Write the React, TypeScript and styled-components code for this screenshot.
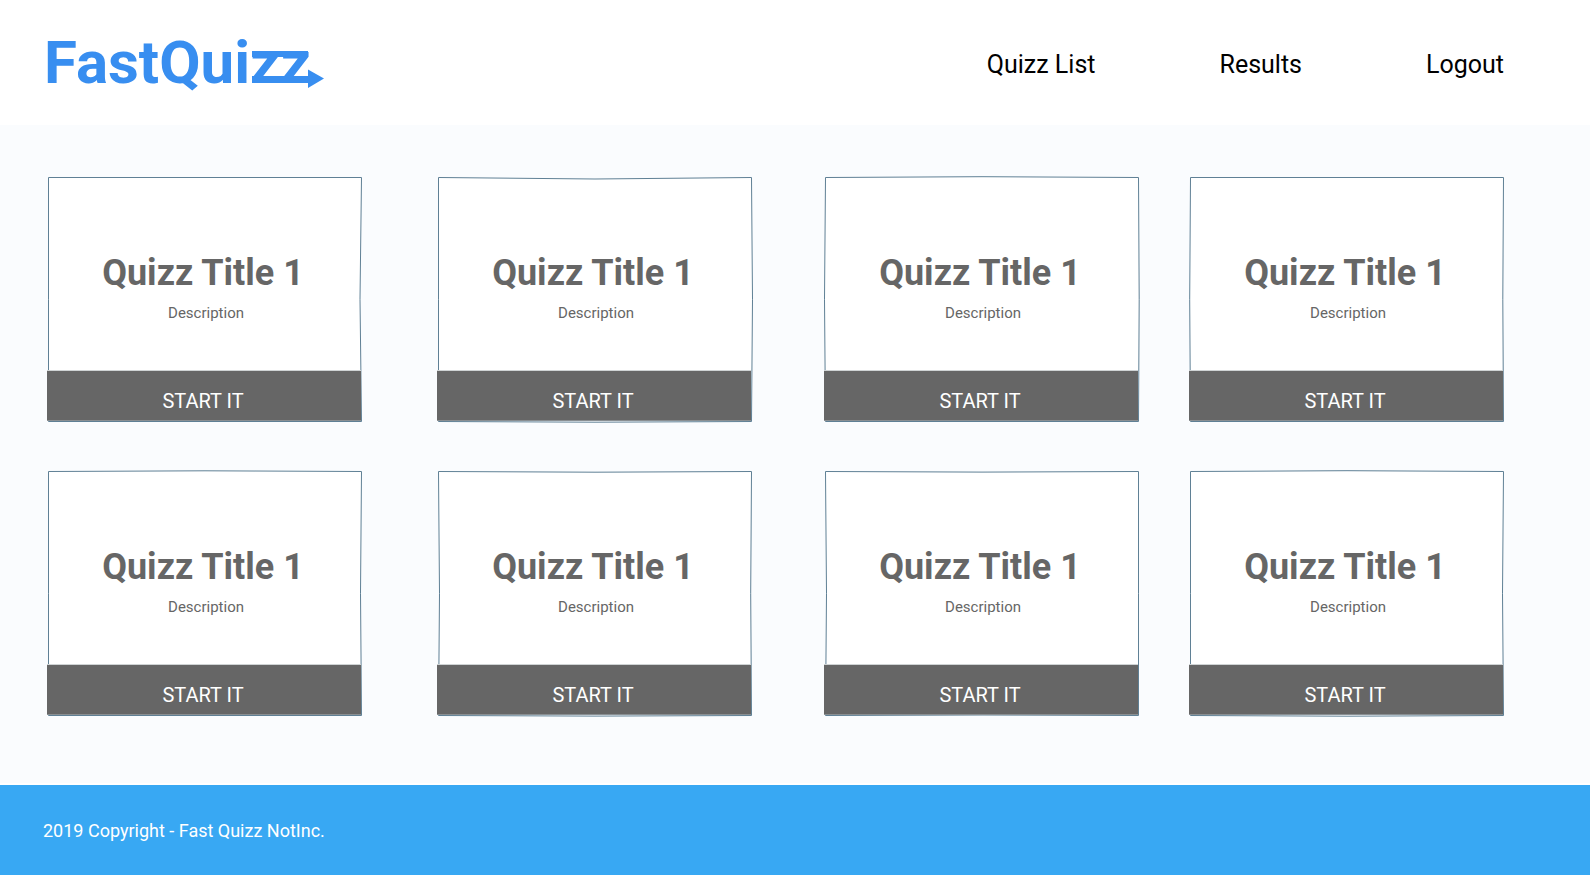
import React from "react";
import styled, { createGlobalStyle } from "styled-components";

const GlobalStyle = createGlobalStyle`
  *, *::before, *::after { box-sizing: border-box; }
  body {
    margin: 0;
    background: #ffffff;
    font-family: Roboto, "Liberation Sans", sans-serif;
  }
`;

const Page = styled.div`
  display: flex;
  flex-direction: column;
  min-height: 100vh;
`;

const Header = styled.header`
  display: flex;
  align-items: center;
  justify-content: space-between;
  height: 125px;
  padding: 0 86px 0 44px;
  background: #ffffff;
`;

const LogoLink = styled.a`
  display: block;
  line-height: 0;
`;

const LogoText = styled.text`
  font-family: Roboto, "Liberation Sans", sans-serif;
  font-size: 60px;
  font-weight: 700;
  fill: #388ef0;
`;

const Nav = styled.nav`
  display: flex;
  gap: 124px;
  padding-top: 4px;
`;

const NavLink = styled.a`
  color: #000000;
  font-size: 25px;
  line-height: 30px;
  text-decoration: none;
`;

const Main = styled.main`
  flex: 1;
  padding: 52px 86px 67px 48px;
  background: #fafcfe;
`;

const QuizGrid = styled.ul`
  display: grid;
  grid-template-columns: 390fr 387fr 365fr 314fr;
  row-gap: 49px;
  margin: 0;
  padding: 0;
  list-style: none;
`;

const Card = styled.li`
  position: relative;
  display: flex;
  flex-direction: column;
  width: 100%;
  max-width: 314px;
  height: 245px;
`;

const Outline = styled.svg`
  position: absolute;
  inset: 0;
  width: 100%;
  height: 100%;
  overflow: visible;
`;

const CardBody = styled.div`
  position: relative;
  flex: 1;
  padding-top: 73px;
  text-align: center;
`;

const Title = styled.h2`
  margin: 0;
  padding-right: 4px;
  color: #666666;
  font-size: 36px;
  font-weight: 700;
  line-height: 46px;
`;

const Description = styled.p`
  margin: 7px 0 0;
  padding-left: 2px;
  color: #666666;
  font-size: 15px;
  line-height: 20px;
`;

const StartButton = styled.button`
  position: relative;
  width: 100%;
  height: 51px;
  margin: 0 0 1px -1px;
  padding: 11px 2px 0 0;
  border: 0;
  border-top: 1px solid #cfd3d4;
  border-bottom: 1px solid #8a8f92;
  background: #666666;
  color: #ffffff;
  font-family: inherit;
  font-size: 20px;
  line-height: 24px;
  cursor: pointer;
`;

const Footer = styled.footer`
  display: flex;
  align-items: center;
  height: 90px;
  margin-top: 2px;
  padding: 2px 43px 0;
  background: #38a8f3;
  color: #ffffff;
  font-size: 18px;
  line-height: 24px;
`;

// How far each hand-drawn edge bows at its middle: top, right, bottom, left.
type Bow = [number, number, number, number];

const quizzes: { id: number; title: string; description: string; bow: Bow }[] = [
  { id: 1, title: "Quizz Title 1", description: "Description", bow: [0, -1.5, 0, 0] },
  { id: 2, title: "Quizz Title 1", description: "Description", bow: [1.5, 1, 0.7, 0] },
  { id: 3, title: "Quizz Title 1", description: "Description", bow: [-0.8, 0.7, 0, -1] },
  { id: 4, title: "Quizz Title 1", description: "Description", bow: [0, -0.7, 0, -0.8] },
  { id: 5, title: "Quizz Title 1", description: "Description", bow: [-0.7, -1, 0, 0] },
  { id: 6, title: "Quizz Title 1", description: "Description", bow: [0.7, -0.8, 0.6, 1] },
  { id: 7, title: "Quizz Title 1", description: "Description", bow: [0.6, 0, -0.5, 1] },
  { id: 8, title: "Quizz Title 1", description: "Description", bow: [-0.8, -1, 0.7, 0] },
];

function Logo() {
  return (
    <svg width="284" height="73" viewBox="0 0 284 73" role="img" aria-label="FastQuizz">
      <LogoText x="0" y="57">FastQuizz</LogoText>
      <path d="M208 25h56v6h-56zM208 50h56v7h-56zM264 43.500l16 9l-16 9.500z" fill="#388ef0" />
    </svg>
  );
}

function SketchOutline({ bow }: { bow: Bow }) {
  const [t, r, b, l] = bow.map((v) => v * 2);
  return (
    <Outline viewBox="0 0 314 245" preserveAspectRatio="none" aria-hidden="true">
      <path
        d={`M.5 .5Q157 ${0.5 + t} 313.500 .5Q${313.5 + r} 122 313.500 244.500Q157 ${244.5 + b} .5 244.500Q${0.5 + l} 122 .5 .5Z`}
        fill="#ffffff"
        stroke="#5f8095"
      />
    </Outline>
  );
}

export default function App() {
  return (
    <>
      <GlobalStyle />
      <Page>
        <Header>
          <LogoLink href="#">
            <Logo />
          </LogoLink>
          <Nav>
            <NavLink href="#quizzes">Quizz List</NavLink>
            <NavLink href="#results">Results</NavLink>
            <NavLink href="#logout">Logout</NavLink>
          </Nav>
        </Header>
        <Main>
          <QuizGrid id="quizzes">
            {quizzes.map((quiz) => (
              <Card key={quiz.id}>
                <SketchOutline bow={quiz.bow} />
                <CardBody>
                  <Title>{quiz.title}</Title>
                  <Description>{quiz.description}</Description>
                </CardBody>
                <StartButton type="button">START IT</StartButton>
              </Card>
            ))}
          </QuizGrid>
        </Main>
        <Footer>2019 Copyright - Fast Quizz NotInc.</Footer>
      </Page>
    </>
  );
}
